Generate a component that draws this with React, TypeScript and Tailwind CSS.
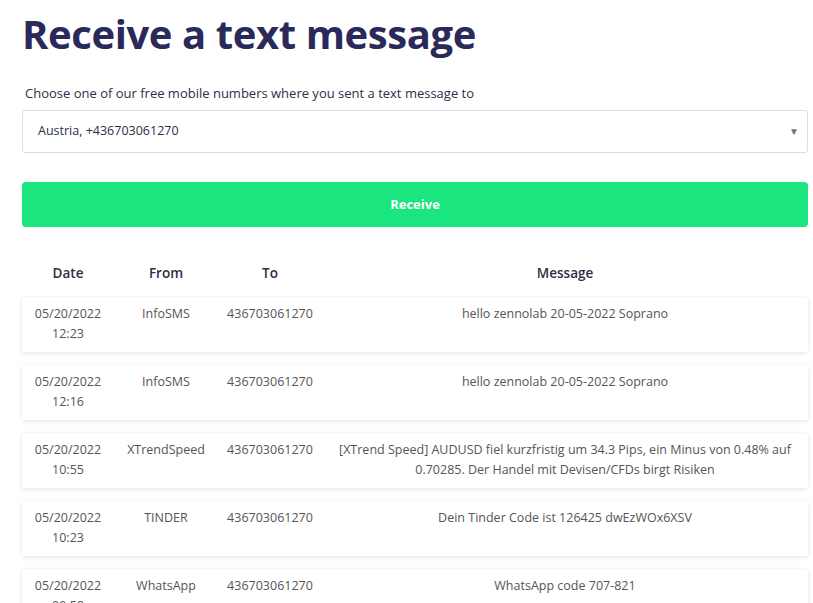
const rows = [
  { date: "05/20/2022", time: "12:23", from: "InfoSMS", to: "436703061270", message: "hello zennolab 20-05-2022 Soprano" },
  { date: "05/20/2022", time: "12:16", from: "InfoSMS", to: "436703061270", message: "hello zennolab 20-05-2022 Soprano" },
  {
    date: "05/20/2022",
    time: "10:55",
    from: "XTrendSpeed",
    to: "436703061270",
    message: "[XTrend Speed] AUDUSD fiel kurzfristig um 34.3 Pips, ein Minus von 0.48% auf 0.70285. Der Handel mit Devisen/CFDs birgt Risiken",
  },
  { date: "05/20/2022", time: "10:23", from: "TINDER", to: "436703061270", message: "Dein Tinder Code ist 126425 dwEzWOx6XSV" },
  { date: "05/20/2022", time: "09:58", from: "WhatsApp", to: "436703061270", message: "WhatsApp code 707-821" },
];

export default function App() {
  return (
    <main className="w-[813px] h-[603px] overflow-hidden bg-white font-['Open_Sans',sans-serif]">
      <div className="px-[22px] pr-[5px]">
        {/* Header */}
        <h1 className="pt-[9px] text-[40px] leading-[50px] font-bold text-[#2a2a5a] tracking-[-0.4px]">
          Receive a text message
        </h1>

        <label className="block mt-[25px] ml-[3px] text-[13px] leading-[18px] text-[#2e2e48]">
          Choose one of our free mobile numbers where you sent a text message to
        </label>

        {/* Number select */}
        <div className="mt-[8px] h-[43px] flex items-center justify-between border border-[#dcdce6] rounded-[3px] pl-[15px] pr-[8px]">
          <span className="text-[12.5px] text-[#2e2e48]">Austria, +436703061270</span>
          <span className="text-[10px] text-[#777]">▼</span>
        </div>

        <button className="mt-[29px] w-full h-[45px] rounded-[4px] bg-[#1ae57f] text-white text-[13px] font-bold">
          Receive
        </button>

        {/* Messages table */}
        <div className="mt-[35px] grid grid-cols-[92px_104px_104px_1fr] text-[13.5px] font-semibold text-[#2e2e48] h-[23px] items-center text-center">
          <div>Date</div>
          <div>From</div>
          <div>To</div>
          <div>Message</div>
        </div>

        <div className="mt-[12px] flex flex-col gap-[13px]">
          {rows.map((row, i) => (
            <div
              key={i}
              className="grid grid-cols-[92px_104px_104px_1fr] min-h-[55px] bg-white rounded-[2px] shadow-[0_1px_4px_rgba(0,0,0,0.12)] pt-[7px] pb-[7px] text-[12.5px] leading-[20px] text-[#555] text-center"
            >
              <div>
                {row.date}
                <br />
                {row.time}
              </div>
              <div>{row.from}</div>
              <div>{row.to}</div>
              <div className="px-[10px]">{row.message}</div>
            </div>
          ))}
        </div>
      </div>
    </main>
  );
}
